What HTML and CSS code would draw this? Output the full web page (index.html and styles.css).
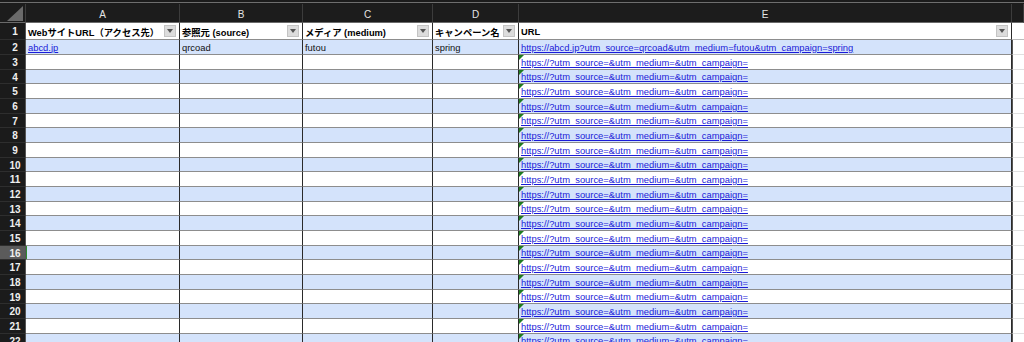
FILE: index.html
```html
<!DOCTYPE html>
<html lang="ja">
<head>
<meta charset="utf-8">
<link rel="stylesheet" href="styles.css">
</head>
<body>
<div class="sheet">
  <div class="topbar"></div>
  <div class="row colhead">
    <div class="c corner"><span class="tri"></span></div>
    <div class="c">A</div>
    <div class="c">B</div>
    <div class="c">C</div>
    <div class="c">D</div>
    <div class="c">E</div>
    <div class="c"></div>
  </div>
  <div class="row hdr">
    <div class="c rn">1</div>
    <div class="c"><span class="t">WebサイトURL（アクセス先）</span><span class="fb"></span></div>
    <div class="c"><span class="t">参照元 (source)</span><span class="fb"></span></div>
    <div class="c"><span class="t">メディア (medium)</span><span class="fb"></span></div>
    <div class="c"><span class="t">キャンペーン名</span><span class="fb"></span></div>
    <div class="c"><span class="t">URL</span><span class="fb"></span></div>
    <div class="c ext"></div>
  </div>
  <div class="row data even">
    <div class="c rn">2</div>
    <div class="c"><span class="lnk">abcd.jp</span></div>
    <div class="c">qrcoad</div>
    <div class="c">futou</div>
    <div class="c">spring</div>
    <div class="c"><span class="lnk">https://abcd.jp?utm_source=qrcoad&amp;utm_medium=futou&amp;utm_campaign=spring</span></div>
    <div class="c ext"></div>
  </div>
  <div id="rows"></div>
</div>
<script src="app.js"></script>
</body>
</html>
```
FILE: app.js
```js
const host = document.getElementById('rows');
for (let n = 3; n <= 22; n++) {
  const r = document.createElement('div');
  r.className = 'row data ' + (n % 2 === 0 ? 'even' : 'odd') + (n === 16 ? ' sel' : '');
  r.innerHTML =
    '<div class="c rn">' + n + '</div>' +
    '<div class="c"></div><div class="c"></div><div class="c"></div><div class="c"></div>' +
    '<div class="c err"><span class="lnk">https://?utm_source=&amp;utm_medium=&amp;utm_campaign=</span></div>' +
    '<div class="c ext"></div>';
  host.appendChild(r);
}
```
FILE: styles.css
```css
* { box-sizing: border-box; }
html, body { margin: 0; padding: 0; }
body {
  background: #1b1b1b;
  width: 1024px;
  height: 342px;
  overflow: hidden;
  font-family: "Liberation Sans", "Noto Sans CJK JP", sans-serif;
  font-size: 9.4px;
  color: #111;
}
.sheet { display: flex; flex-direction: column; }
.topbar {
  height: 4px;
  border-top: 2px solid #1b1b1b;
  border-bottom: 1px solid #1b1b1b;
  background: #6e6e6e;
}
.row {
  display: grid;
  grid-template-columns: 26px 154px 123px 130px 86px 493px 12px;
}
.c {
  border-right: 1px solid #2a2a2a;
  border-bottom: 1px solid #8d8d8d;
  white-space: nowrap;
  overflow: hidden;
  padding-left: 2px;
  display: flex;
  align-items: center;
}
.colhead { height: 19px; }
.colhead .c {
  background: #1c1c1c;
  color: #e4e4e4;
  justify-content: center;
  padding: 2px 0 0;
  border-right: 1px solid #3c3c3c;
  border-bottom: 1px solid #6a6a6a;
  font-size: 10px;
}
.colhead .c.corner {
  padding: 0 2px 1px 0;
  align-items: flex-end;
  justify-content: flex-end;
}
.tri {
  display: block;
  width: 16px;
  height: 15px;
  flex: none;
  background: #6a6a6a;
  clip-path: polygon(0 100%, 100% 100%, 100% 0);
}
.hdr { height: 17px; }
.hdr .c { background: #fff; font-weight: bold; justify-content: space-between; padding: 1px 3px 0 2px; }
.hdr .t { font-size: 9.3px; color: #000; }
.hdr .ext { border-right: none; border-bottom: 1px solid #bbb; }
.row .rn, .hdr .rn {
  background: #1b1b1b;
  color: #efefef;
  font-weight: bold;
  justify-content: center;
  padding: 1px 0 0 5px;
  border-right: 1px solid #555;
  border-bottom: 1px solid #2e2e2e;
  font-size: 10px;
}
.fb {
  width: 12px;
  height: 12px;
  background: #dcdcdc;
  border: 1px solid #c4c4c4;
  position: relative;
  flex: none;
  margin-top: -1px;
}
.fb::after {
  content: "";
  position: absolute;
  left: 2px;
  top: 3px;
  border-left: 3.5px solid transparent;
  border-right: 3.5px solid transparent;
  border-top: 4px solid #555;
}
.data { height: 15px; }
#rows .data:nth-child(3n+2) { height: 14px; }
.data.even .c { background: #d4e3fb; }
.data.odd .c { background: #fff; }
.data.even .rn, .data.odd .rn { background: #1b1b1b; }
.data.sel .rn { background: #5b5b5b; }
.sel .rn + .c { box-shadow: inset 1px 0 0 #2e8b2e; }
.data .ext, .data.even .ext, .data.odd .ext { background: #fff; border-right: none; border-left: 1px solid #555; border-bottom: 1px solid #e0e0e0; }
.lnk { color: #1a1ad8; text-decoration: underline; }
.err { position: relative; }
.err::before {
  content: "";
  position: absolute;
  left: 0;
  top: 0;
  border-top: 5px solid #1f7a1f;
  border-right: 5px solid transparent;
}
#rows { display: flex; flex-direction: column; }
```
